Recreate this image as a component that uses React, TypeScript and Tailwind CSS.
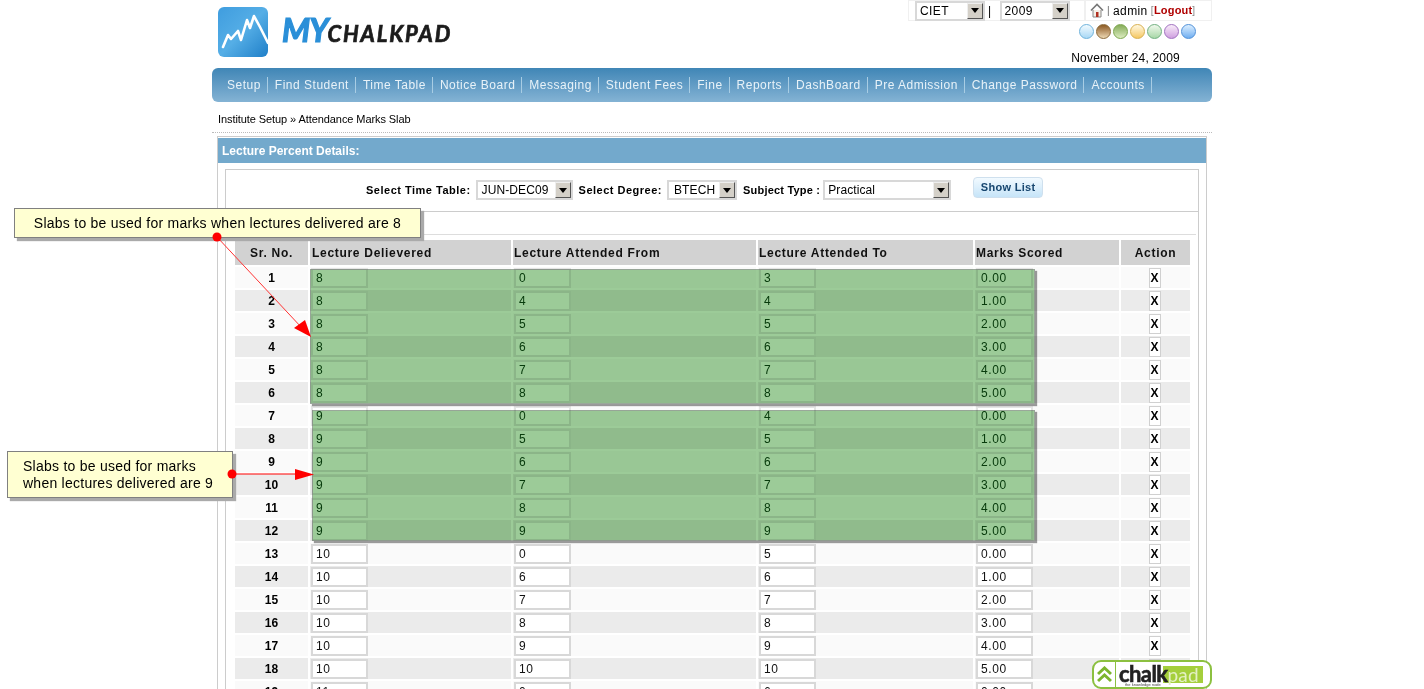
const navItems = [
  "Setup",
  "Find Student",
  "Time Table",
  "Notice Board",
  "Messaging",
  "Student Fees",
  "Fine",
  "Reports",
  "DashBoard",
  "Pre Admission",
  "Change Password",
  "Accounts",
];

const dots = [
  "from-[#f2fbff] to-[#a9d8f5] border-[#6fb3dc]",
  "from-[#8c5a20] to-[#ecd8b4] border-[#8c6a3a]",
  "from-[#86ac58] to-[#dcecc0] border-[#7ea850]",
  "from-[#fff8e0] to-[#f5c860] border-[#d8b050]",
  "from-[#f0f8ec] to-[#a8d8a8] border-[#70b080]",
  "from-[#f8ecf8] to-[#d0a0e0] border-[#a070c0]",
  "from-[#dcefff] to-[#70aef0] border-[#5090d8]",
];

const rows = [
  ["8", "0", "3", "0.00"],
  ["8", "4", "4", "1.00"],
  ["8", "5", "5", "2.00"],
  ["8", "6", "6", "3.00"],
  ["8", "7", "7", "4.00"],
  ["8", "8", "8", "5.00"],
  ["9", "0", "4", "0.00"],
  ["9", "5", "5", "1.00"],
  ["9", "6", "6", "2.00"],
  ["9", "7", "7", "3.00"],
  ["9", "8", "8", "4.00"],
  ["9", "9", "9", "5.00"],
  ["10", "0", "5", "0.00"],
  ["10", "6", "6", "1.00"],
  ["10", "7", "7", "2.00"],
  ["10", "8", "8", "3.00"],
  ["10", "9", "9", "4.00"],
  ["10", "10", "10", "5.00"],
  ["11", "0", "6", "0.00"],
];

const SelectBox = ({ label, width }: { label: string; width: string }) => (
  <div className={`flex h-[20px] items-center justify-between border-2 border-[#d8d8d8] bg-white ${width}`}>
    <span>{label}</span>
    <span className="flex h-[16px] w-[16px] items-center justify-center border border-b-[#555] border-l-[#eee] border-r-[#555] border-t-[#eee] bg-[#d4d0c8]">
      <span className="h-0 w-0 border-x-[4px] border-t-[5px] border-x-transparent border-t-black" />
    </span>
  </div>
);

const Cell = ({ value, highlight }: { value: string; highlight: boolean }) => (
  <div
    className={`ml-px flex h-[20px] w-[57px] items-center border-2 bg-white pl-[3px] text-[12px] tracking-[0.6px] ${
      highlight ? "border-[#e4e4e4] text-[#0c4a14]" : "border-[#d8d8d8] text-[#111]"
    }`}
  >
    {value}
  </div>
);

const Logo = () => (
  <svg width="50" height="50" viewBox="0 0 50 50" className="shrink-0">
    <defs>
      <linearGradient id="logoBlue" x1="0" y1="0" x2="1" y2="1">
        <stop offset="0" stopColor="#3f9ddf" />
        <stop offset="0.5" stopColor="#55aee6" />
        <stop offset="1" stopColor="#1f7fc8" />
      </linearGradient>
    </defs>
    <rect width="50" height="50" rx="6" fill="url(#logoBlue)" />
    <path
      d="M5 40 L10 28 L13 32 L20 24 L23 33 L29 13 L32 21 L36 9 L42 20 L50 36"
      fill="none"
      stroke="#fff"
      strokeWidth="2.6"
      strokeLinejoin="round"
      strokeLinecap="round"
    />
  </svg>
);

const Arrows = () => (
  <svg width="1424" height="689" className="pointer-events-none absolute left-0 top-0">
    <line x1="217" y1="237" x2="302" y2="328" stroke="#f33" strokeWidth="1" />
    <polygon points="311,337 294,328 305,320" fill="#f00" />
    <circle cx="217" cy="237" r="4.5" fill="#f00" />
    <line x1="232" y1="474" x2="296" y2="474" stroke="#f00" strokeWidth="1.2" />
    <polygon points="314,474.5 295,469 295,480" fill="#f00" />
    <circle cx="232" cy="474" r="4.5" fill="#f00" />
  </svg>
);

const Brand = () => (
  <div className="absolute left-[1092px] top-[660px] flex h-[29px] w-[120px] overflow-hidden rounded-[9px] border-2 border-[#8cc040] bg-white">
    <div className="flex w-[22px] items-center justify-center border-r border-[#8cc040]">
      <svg width="15" height="18" viewBox="0 0 15 18">
        <path d="M1 8 L7.5 2 L14 8 M1 15 L7.5 9 L14 15" fill="none" stroke="#7cb52e" strokeWidth="3" />
      </svg>
    </div>
    <div className="relative flex-1">
      <div className="absolute left-[47px] top-[4px] h-[17px] w-[40px] bg-[#a5cf3c]" />
      <div className="relative flex h-[21px] items-baseline pl-[3px] pt-[1px] font-['Lato'] text-[22px] font-bold leading-none tracking-[-0.6px] text-[#222] [-webkit-text-stroke:0.6px_#222]">
        chalk
        <span className="text-[19px] font-normal tracking-[0.2px] text-[#e4f0c4] [-webkit-text-stroke:0]">pad</span>
      </div>
      <div className="absolute left-[9px] top-[20px] font-['Liberation_Sans'] text-[4px] leading-[5px] text-[#444]">
        the knowledge node
      </div>
    </div>
  </div>
);

const App = () => {
  return (
    <div className="relative h-[689px] w-[1424px] overflow-hidden bg-white font-['Liberation_Sans',Arial,sans-serif] text-[12px] text-black">
      <div className="mx-auto w-[1000px]">
        <header className="flex h-[68px] justify-between">
          <div className="flex items-start pl-[6px] pt-[7px]">
            <Logo />
            <div className="ml-[14px] mt-[7px] flex items-baseline font-['Lato'] font-bold italic leading-none">
              <span className="text-[32px] tracking-[-1px] text-[#2a8fd8] [-webkit-text-stroke:1.2px_#2a8fd8]">MY</span>
              <span className="text-[22px] tracking-[1.8px] text-[#1c1c1c] [-webkit-text-stroke:0.7px_#1c1c1c]">CHALKPAD</span>
            </div>
          </div>
          <div className="flex w-[305px] flex-col items-end">
            <div className="flex h-[21px] items-center">
              <div className="flex h-[21px] w-[177px] items-center border border-[#f0f0f0] pl-[6px] tracking-[0.4px]">
                <SelectBox label="CIET" width="w-[70px] pl-[3px]" />
                <span className="ml-[3px] mr-[8px]">|</span>
                <SelectBox label="2009" width="w-[70px] pl-[3px]" />
              </div>
              <div className="flex h-[21px] w-[127px] items-center border border-[#f0f0f0] pl-[4px] tracking-[0.4px]">
                <svg width="14" height="15" viewBox="0 0 14 15">
                  <path d="M1 7.5 L7 1.5 L13 7.5" fill="none" stroke="#777" strokeWidth="1.6" />
                  <path d="M3 7 V14 H11 V7" fill="#f4efe6" stroke="#888" />
                  <rect x="6" y="9" width="2.5" height="5" fill="#b03020" />
                </svg>
                <span className="ml-[3px] text-[10px] text-[#666]">|</span>
                <span className="ml-[3px]">admin</span>
                <span className="ml-[3px] text-[10px] text-[#888]">[</span>
                <span className="text-[11px] font-bold tracking-[0.2px] text-[#b00000]">Logout</span>
                <span className="text-[10px] text-[#888]">]</span>
              </div>
            </div>
            <div className="mr-[16px] mt-[3px] flex gap-[2px]">
              {dots.map((dot) => (
                <span key={dot} className={`h-[15px] w-[15px] rounded-full border bg-gradient-to-b ${dot}`} />
              ))}
            </div>
            <div className="mr-[32px] mt-[10px] tracking-[0.2px]">November 24, 2009</div>
          </div>
        </header>

        <nav className="flex h-[34px] items-center rounded-[6px] bg-gradient-to-b from-[#3f86b6] to-[#84b3d4] pl-[8px] tracking-[0.5px] text-[#e8f2f8]">
          {navItems.map((item) => (
            <span key={item} className="flex h-[16px] items-center border-r border-[#a8cde4] pl-[7px] pr-[6px]">
              {item}
            </span>
          ))}
        </nav>

        <div className="mt-[9px] flex h-[22px] items-center border-b border-dotted border-[#bbb] pb-[4px] pl-[6px] text-[11px] tracking-[-0.08px]">
          Institute Setup » Attendance Marks Slab
        </div>

        <section className="ml-[5px] mt-[3px] h-[600px] w-[990px] border border-[#cccccc]">
          <h2 className="mt-px flex h-[25px] items-center bg-[#73a9cc] pl-[4px] font-bold text-white">
            Lecture Percent Details:
          </h2>
          <div className="ml-[7px] mt-[6px] h-[600px] w-[974px] border border-[#ccc]">
            <div className="flex h-[42px] items-center border-b border-[#ccc] pb-px pl-[140px] text-[11px] font-bold tracking-[0.5px]">
              <span>Select Time Table:</span>
              <div className="ml-[5px] text-[12px] font-normal tracking-[0.1px]">
                <SelectBox label="JUN-DEC09" width="w-[97px] pl-[4px]" />
              </div>
              <span className="ml-[6px]">Select Degree:</span>
              <div className="ml-[5px] text-[12px] font-normal tracking-[0.1px]">
                <SelectBox label="BTECH" width="w-[70px] pl-[5px]" />
              </div>
              <span className="ml-[6px] tracking-[0.2px]">Subject Type :</span>
              <div className="ml-[3px] text-[12px] font-normal tracking-[0.1px]">
                <SelectBox label="Practical" width="w-[128px] pl-[3px]" />
              </div>
              <span className="mb-[5px] ml-[22px] flex h-[21px] w-[70px] items-center justify-center rounded-[4px] border border-[#cfe0ee] bg-gradient-to-b from-[#f2faff] to-[#c6e4f8] text-[11px] tracking-[0.3px] text-[#17466f]">
                Show List
              </span>
            </div>
            <div className="mr-[2px] h-[23px] border-b border-[#ddd]" />
            <table className="ml-[7px] mt-[3px] table-fixed border-separate border-spacing-[2px]">
              <colgroup>
                <col className="w-[73px]" />
                <col className="w-[201px]" />
                <col className="w-[243px]" />
                <col className="w-[215px]" />
                <col className="w-[144px]" />
                <col className="w-[69px]" />
              </colgroup>
              <thead>
                <tr className="h-[25px] bg-[#d2d2d2] font-bold tracking-[0.7px] text-[#111]">
                  <th className="p-0 text-center">Sr. No.</th>
                  <th className="p-0 pl-[2px] text-left">Lecture Delievered</th>
                  <th className="p-0 pl-px text-left">Lecture Attended From</th>
                  <th className="p-0 pl-px text-left">Lecture Attended To</th>
                  <th className="p-0 pl-px text-left">Marks Scored</th>
                  <th className="p-0 text-center">Action</th>
                </tr>
              </thead>
              <tbody>
                {rows.map((row, i) => (
                  <tr key={i} className={`h-[21px] ${i % 2 === 0 ? "bg-[#fafafa]" : "bg-[#ebebeb]"}`}>
                    <td className="p-0 text-center font-bold">{i + 1}</td>
                    {row.map((value, j) => (
                      <td key={j} className="p-0">
                        <Cell value={value} highlight={i < 12} />
                      </td>
                    ))}
                    <td className="p-0 pr-[2px]">
                      <div className="mx-auto flex h-[20px] w-[12px] items-center justify-center border border-[#d0d0d0] bg-white text-[12px] font-bold">
                        X
                      </div>
                    </td>
                  </tr>
                ))}
              </tbody>
            </table>
          </div>
        </section>
      </div>

      {/* green highlight boxes drawn over the table */}
      <div className="absolute left-[310px] top-[269px] h-[135px] w-[725px] border border-[#9aa89a] bg-[#9ccb98] shadow-[2px_2px_1px_#9a9a9a] mix-blend-multiply" />
      <div className="absolute left-[312px] top-[410px] h-[131px] w-[723px] border border-[#9aa89a] bg-[#9ccb98] shadow-[2px_2px_1px_#9a9a9a] mix-blend-multiply" />

      <div className="absolute left-[14px] top-[208px] flex h-[30px] w-[407px] items-center justify-center border border-[#808080] bg-[#ffffd2] text-[14px] tracking-[0.25px] shadow-[3px_3px_1px_#aaa]">
        Slabs to be used for marks when lectures delivered are 8
      </div>
      <div className="absolute left-[7px] top-[451px] h-[47px] w-[226px] border border-[#808080] bg-[#ffffd2] pl-[15px] pt-[6px] text-[14px] leading-[17px] tracking-[0.25px] shadow-[3px_3px_1px_#aaa]">
        Slabs to be used for marks
        <br />
        when lectures delivered are 9
      </div>

      <Arrows />
      <Brand />
    </div>
  );
};

export default App;
